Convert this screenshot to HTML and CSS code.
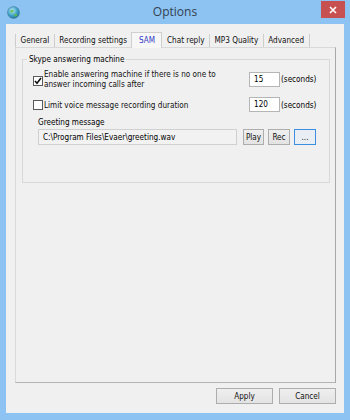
FILE: index.html
```html
<!DOCTYPE html>
<html>
  <head>
    <link rel="stylesheet" href="styles.css">
  </head>
  <body>
    <div class="window">
      <div class="titlebar">
        <span class="app-icon">
          <svg width="13" height="13" viewBox="0 0 13 13">
            <defs>
              <radialGradient id="globe" cx="40%" cy="35%" r="70%">
                <stop offset="0" stop-color="#bfe9f7"/>
                <stop offset="0.6" stop-color="#3aa0c8"/>
                <stop offset="1" stop-color="#1d6a94"/>
              </radialGradient>
            </defs>
            <circle cx="6.5" cy="6.5" r="6" fill="url(#globe)" stroke="#4a7f9c" stroke-width="0.6"/>
            <path d="M3 5 Q5 3 7 4.5 Q6 7 4 7 Z" fill="#6fc46a"/>
            <path d="M7 8 Q9.5 7 10.5 9 Q9 11 7.5 10.5 Z" fill="#5cb85a"/>
          </svg>
        </span>
        <span class="title">Options</span>
        <span class="close">
          <svg width="8" height="8" viewBox="0 0 8 8">
            <path d="M1 1 L7 7 M7 1 L1 7" stroke="#fff" stroke-width="1.6"/>
          </svg>
        </span>
      </div>

      <div class="client">
        <div class="tabs">
          <span class="tab first">General</span>
          <span class="tab">Recording settings</span>
          <span class="tab active">SAM</span>
          <span class="tab">Chat reply</span>
          <span class="tab">MP3 Quality</span>
          <span class="tab">Advanced</span>
        </div>

        <div class="panel">
          <fieldset class="group">
            <legend>Skype answering machine</legend>

            <div class="opt-row tall">
              <span class="check checked">
                <svg width="8" height="8" viewBox="0 0 8 8">
                  <path d="M1 4 L3 6.3 L7 1" fill="none" stroke="#111" stroke-width="1.6"/>
                </svg>
              </span>
              <span class="opt-label">Enable answering machine if there is no one to<br>answer incoming calls after</span>
              <span class="num">15</span>
              <span class="unit">(seconds)</span>
            </div>

            <div class="opt-row">
              <span class="check"></span>
              <span class="opt-label">Limit voice message recording duration</span>
              <span class="num">120</span>
              <span class="unit">(seconds)</span>
            </div>

            <div class="greeting">
              <div class="field-label">Greeting message</div>
              <div class="path-row">
                <span class="path">C:\Program Files\Evaer\greeting.wav</span>
                <button class="btn small play">Play</button>
                <button class="btn small">Rec</button>
                <button class="btn small focus">...</button>
              </div>
            </div>
          </fieldset>
        </div>

        <div class="actions">
          <button class="btn wide">Apply</button>
          <button class="btn wide">Cancel</button>
        </div>
      </div>
    </div>
  </body>
</html>
```

FILE: styles.css
```css
* { margin: 0; padding: 0; box-sizing: border-box; }

body {
  width: 350px;
  height: 420px;
  overflow: hidden;
  font-family: "DejaVu Sans Condensed", "DejaVu Sans", sans-serif;
  font-size: 8.1px;
  color: #000;
}

/* window frame */
.window {
  width: 350px;
  height: 420px;
  background: #8cc3f2;
  display: flex;
  flex-direction: column;
}

.titlebar {
  height: 24px;
  display: grid;
  grid-template-columns: 1fr auto 1fr;
  align-items: start;
}
.app-icon { padding: 6px 0 0 7px; }
.app-icon svg { display: block; }
.title {
  font-family: "Open Sans", "Noto Sans", sans-serif;
  font-size: 12px;
  line-height: 24px;
  color: #34414f;
}
.close {
  justify-self: end;
  width: 24px;
  height: 17px;
  margin: 1px 5px 0 0;
  background: #c75050;
  display: flex;
  align-items: center;
  justify-content: center;
}
.close svg { display: block; }

.client {
  flex: 1;
  margin: 0 6px 7px 6px;
  background: #f0f0f0;
  padding: 8px 8px 9px 9px;
  display: flex;
  flex-direction: column;
}

/* tabs */
.tabs {
  height: 15px;
  display: flex;
  align-items: flex-end;
}
.tab {
  height: 13px;
  line-height: 13px;
  padding: 0 4.5px;
  border-right: 1px solid #cdcdcd;
  color: #111;
  white-space: nowrap;
}
.tab.first { border-left: 1px solid #cdcdcd; }
.tab.active {
  height: 16px;
  line-height: 15px;
  margin-bottom: -1px;
  margin-left: -1px;
  padding: 0 6.5px;
  background: #f7f7f7;
  border: 1px solid #cfcfcf;
  border-bottom: none;
  color: #3338c4;
  position: relative;
}

.panel {
  flex: 1;
  background: #f0f0f0;
  border: 1px solid;
  border-color: #d9d9d9 #a8a8a8 #b4b4b4 #d9d9d9;
  padding: 6px 5px 0 6px;
}

/* group box */
.group {
  border: 1px solid #d8d8d8;
  padding: 4px 10px 37px 10px;
}
.group legend {
  margin-left: -6px;
  padding: 0 2px;
  line-height: 11px;
}

.opt-row {
  display: flex;
  align-items: center;
  height: 15px;
  margin-top: 8px;
}
.opt-row.tall { height: 20px; margin-top: 0; }
.check {
  width: 10px;
  height: 10px;
  border: 1px solid #5a5a5a;
  background: #fff;
  display: flex;
  align-items: center;
  justify-content: center;
  margin-right: 1px;
}
.opt-row.tall .check { margin-top: 3px; }
.check svg { display: block; }
.opt-label {
  flex: 1;
  line-height: 10px;
  color: #111;
}
.num {
  width: 31px;
  height: 15px;
  line-height: 13px;
  border: 1px solid #b5b5b5;
  background: #fff;
  padding-left: 4px;
}
.unit {
  width: 39px;
  padding-left: 1px;
}

.greeting { margin: 5px 0 0 5px; }
.field-label { line-height: 11px; }
.path-row {
  display: flex;
  height: 16px;
  margin-top: 1px;
}
.path {
  width: 199px;
  border: 1px solid #d0d0d0;
  background: #f2f2f2;
  line-height: 14px;
  padding-left: 4px;
  white-space: nowrap;
  overflow: hidden;
}

/* buttons */
.btn {
  font-family: inherit;
  font-size: 8.1px;
  color: #111;
  background: linear-gradient(#efefef, #e3e3e3);
  border: 1px solid #adadad;
  height: 16px;
  line-height: 14px;
}
.btn.small { width: 22px; margin-left: 4px; }
.btn.play { margin-left: 6px; width: 21px; }
.btn.focus { border-color: #3c8ee0; background: #e8eef4; }

.actions {
  display: flex;
  justify-content: flex-end;
  gap: 6px;
  margin-top: 5px;
}
.btn.wide { width: 57px; }
```
